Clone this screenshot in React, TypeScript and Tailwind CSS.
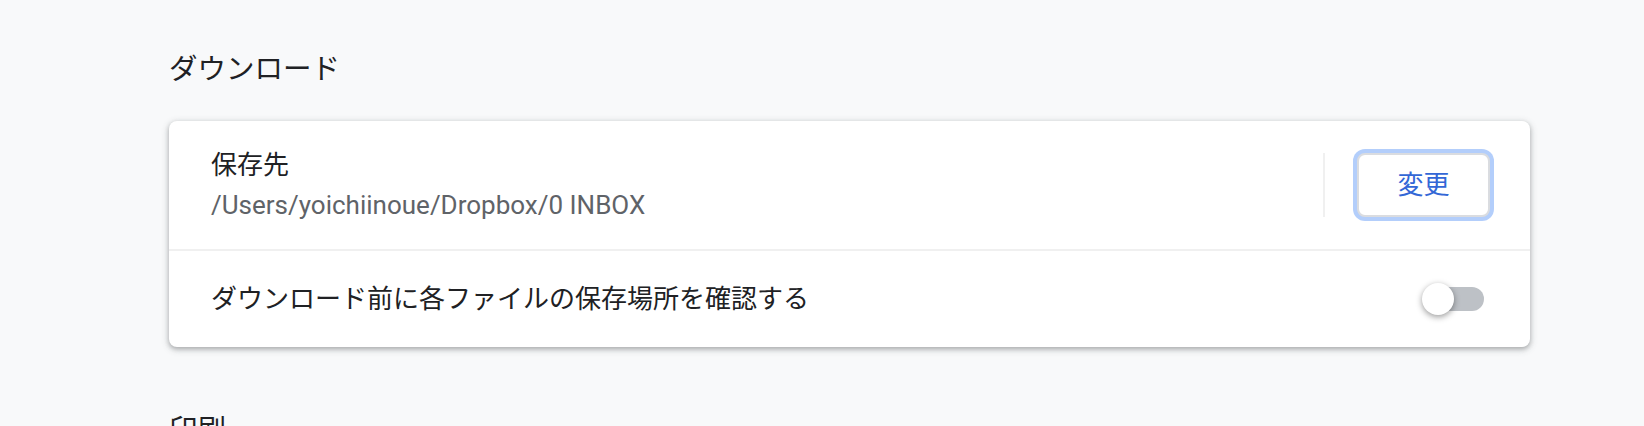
import React from "react";

export default function App() {
  return (
    <div
      className="min-h-screen w-full bg-[#f8f9fa] pl-[169px] pt-[50px]"
      style={{ fontFamily: 'Roboto, "Noto Sans CJK JP", sans-serif' }}
    >
      <div className="w-[1361px]">
        <h2 className="text-[28.5px] leading-[40px] font-normal text-[#202124] mb-[31px]">
          ダウンロード
        </h2>
        <div className="rounded-[8px] bg-white shadow-[0_2px_4px_0_rgba(60,64,67,0.3),0_2px_6px_2px_rgba(60,64,67,0.15)]">
          <div className="flex h-[128px] items-center pl-[42px] pr-[40px]">
            <div className="flex flex-1 flex-col">
              <div className="text-[26px] leading-[40px] text-[#202124]">保存先</div>
              <div className="text-[26px] leading-[40px] text-[#5f6368]">
                /Users/yoichiinoue/Dropbox/0 INBOX
              </div>
            </div>
            <div className="mr-[32px] h-[64px] w-[2px] bg-black/[0.06]" />
            <button className="flex h-[64px] w-[133px] items-center justify-center rounded-[8px] border-2 border-[#dadce0] bg-white text-[26px] leading-[40px] text-[#3367d6] shadow-[0_0_0_4px_rgba(66,133,244,0.4)]">
              変更
            </button>
          </div>
          <div className="flex h-[98px] items-center border-t-2 border-black/[0.06] pl-[42px] pr-[40px]">
            <div className="flex-1 text-[26px] leading-[40px] text-[#202124]">
              ダウンロード前に各ファイルの保存場所を確認する
            </div>
            <div className="relative mr-[6px] h-[32px] w-[62px]">
              <div className="absolute left-[6px] top-[4px] h-[24px] w-[56px] rounded-full bg-[#bdc1c6]" />
              <div className="absolute left-0 top-0 h-[32px] w-[32px] rounded-full bg-white shadow-[0_2px_6px_rgba(0,0,0,0.4)]" />
            </div>
          </div>
        </div>
        <h2 className="mt-[64px] text-[28.5px] leading-[40px] font-normal text-[#202124]">
          印刷
        </h2>
      </div>
    </div>
  );
}
